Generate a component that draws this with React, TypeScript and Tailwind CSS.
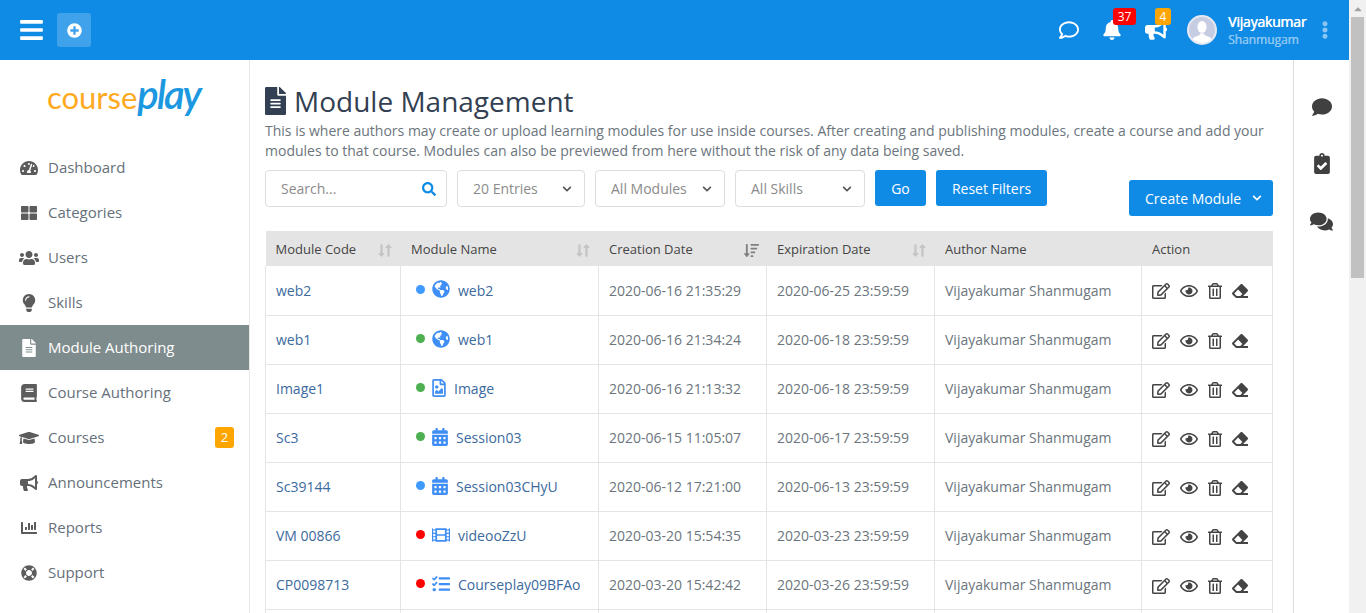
import {
  FaBars, FaPlusCircle, FaRegComment, FaBell, FaBullhorn, FaEllipsisV,
  FaTachometerAlt, FaThLarge, FaUsers, FaLightbulb, FaFileAlt, FaBook, FaGraduationCap,
  FaChartBar, FaLifeRing, FaSearch, FaChevronDown, FaLongArrowAltDown, FaLongArrowAltUp,
  FaSortAmountDown, FaGlobeAmericas, FaRegFileImage, FaCalendarAlt, FaFilm, FaTasks,
  FaRegEdit, FaRegEye, FaRegTrashAlt, FaEraser, FaComment, FaClipboardCheck, FaComments,
  FaCaretUp,
} from "react-icons/fa";

const menu = [
  { label: "Dashboard", icon: FaTachometerAlt, size: "text-[18px]" },
  { label: "Categories", icon: FaThLarge, size: "text-[16px]" },
  { label: "Users", icon: FaUsers, size: "text-[20px]" },
  { label: "Skills", icon: FaLightbulb, size: "text-[18px]" },
  { label: "Module Authoring", icon: FaFileAlt, size: "text-[18px]", active: true },
  { label: "Course Authoring", icon: FaBook, size: "text-[18px]" },
  { label: "Courses", icon: FaGraduationCap, size: "text-[20px]", badge: "2" },
  { label: "Announcements", icon: FaBullhorn, size: "text-[18px]" },
  { label: "Reports", icon: FaChartBar, size: "text-[16px]" },
  { label: "Support", icon: FaLifeRing, size: "text-[16px]" },
];

const rows = [
  { code: "web2", name: "web2", dot: "bg-[#3f9bff]", icon: FaGlobeAmericas, iconW: "w-[18px]", created: "2020-06-16 21:35:29", expires: "2020-06-25 23:59:59" },
  { code: "web1", name: "web1", dot: "bg-[#4caf50]", icon: FaGlobeAmericas, iconW: "w-[18px]", created: "2020-06-16 21:34:24", expires: "2020-06-18 23:59:59" },
  { code: "Image1", name: "Image", dot: "bg-[#4caf50]", icon: FaRegFileImage, iconW: "w-[14px]", created: "2020-06-16 21:13:32", expires: "2020-06-18 23:59:59" },
  { code: "Sc3", name: "Session03", dot: "bg-[#4caf50]", icon: FaCalendarAlt, iconW: "w-[16px]", created: "2020-06-15 11:05:07", expires: "2020-06-17 23:59:59" },
  { code: "Sc39144", name: "Session03CHyU", dot: "bg-[#3f9bff]", icon: FaCalendarAlt, iconW: "w-[16px]", created: "2020-06-12 17:21:00", expires: "2020-06-13 23:59:59" },
  { code: "VM 00866", name: "videooZzU", dot: "bg-[#ff0000]", icon: FaFilm, iconW: "w-[18px]", created: "2020-03-20 15:54:35", expires: "2020-03-23 23:59:59" },
  { code: "CP0098713", name: "Courseplay09BFAo", dot: "bg-[#ff0000]", icon: FaTasks, iconW: "w-[18px]", created: "2020-03-20 15:42:42", expires: "2020-03-26 23:59:59" },
];

const SortIcon = () => (
  <span className="flex text-[#c4c4c4] -mr-[2px]">
    <FaLongArrowAltDown className="w-[7px] h-[15px]" />
    <FaLongArrowAltUp className="w-[7px] h-[15px]" />
  </span>
);

const HeadCell = ({ label, sort }: { label: string; sort?: "none" | "desc" }) => (
  <th className="h-[35px] pt-[3px] px-[10px] text-left font-medium text-[13px] text-[#444] border-l border-[#e4e4e4] first:border-l-0">
    <div className="flex items-center justify-between">
      <span>{label}</span>
      {sort === "none" && <SortIcon />}
      {sort === "desc" && <FaSortAmountDown className="text-[#808080] text-[15px] -mr-[3px]" />}
    </div>
  </th>
);

const Select = ({ label, width }: { label: string; width: string }) => (
  <div className={`${width} h-[37px] flex items-center justify-between pl-[15px] pr-[12px] border border-[#dddddd] rounded-[4px] text-[14px] text-[#8b8b8b]`}>
    <span>{label}</span>
    <FaChevronDown className="text-[10px] text-[#555]" />
  </div>
);

export default function App() {
  return (
    <div className="flex h-[613px] w-[1366px] overflow-hidden bg-white font-['Open_Sans',sans-serif]">
      <div className="w-[1349px] flex flex-col">
        {/* Top bar */}
        <header className="h-[60px] shrink-0 bg-[#0f8be6] flex items-center pl-[20px] pr-[15px] text-white">
          <FaBars className="text-[26px] w-[23px]" />
          <button className="ml-[14px] w-[34px] h-[34px] rounded-[3px] bg-[#3fa2eb] flex items-center justify-center">
            <FaPlusCircle className="text-[15px]" />
          </button>
          <div className="ml-auto flex items-center">
            <FaRegComment className="text-[20px]" />
            <div className="relative ml-[23px]">
              <FaBell className="text-[20px]" />
              <span className="absolute -top-[12px] left-[11px] h-[17px] w-[23px] rounded-[3px] bg-[#ff0000] text-[12px] leading-[17px] text-center">37</span>
            </div>
            <div className="relative ml-[23px]">
              <FaBullhorn className="text-[22px]" />
              <span className="absolute -top-[11px] left-[10px] h-[17px] w-[16px] rounded-[3px] bg-[#ffa500] text-[12px] leading-[17px] text-center">4</span>
            </div>
            <div className="ml-[20px] w-[30px] h-[30px] rounded-full border-2 border-[#e6e9f2] bg-[#c6cde2] overflow-hidden">
              <svg viewBox="0 0 26 26" className="w-full h-full" fill="#fff">
                <ellipse cx="13" cy="10" rx="4.6" ry="6" />
                <path d="M2 26c0-5 4-6.5 7.500-7.500 1-.4 1.500-1 1.500-2h4c0 1 .5 1.600 1.500 2 3.500 1 7.500 2.500 7.500 7.500z" />
              </svg>
            </div>
            <div className="ml-[11px] w-[78px] flex flex-col">
              <span className="text-[14px] leading-[20px] [text-shadow:0.5px_0_0_#fff] whitespace-nowrap tracking-[-0.2px]">Vijayakumar</span>
              <span className="text-[12px] leading-[16px] [text-shadow:0.4px_0_0_#8cc6f2] text-[#8cc6f2] whitespace-nowrap">Shanmugam</span>
            </div>
            <FaEllipsisV className="ml-[10px] text-[18px] text-[#8cc6f2]" />
          </div>
        </header>

        <div className="flex flex-1 min-h-0">
          {/* Sidebar */}
          <aside className="w-[250px] shrink-0 border-r border-[#e8e8e8]">
            <div className="h-[85px] flex items-baseline justify-center pt-[14px] pr-[2px] whitespace-nowrap">
              <span className="font-['Lato',sans-serif] text-[31px] leading-none text-[#ffa91f]">course</span>
              <span className="font-['Lato',sans-serif] italic font-semibold text-[40px] leading-none tracking-[-2px] text-[#1c98e0]">play</span>
            </div>
            <nav>
              {menu.map((item) => (
                <div
                  key={item.label}
                  className={`h-[45px] flex items-center pl-[19px] pr-[15px] text-[15px] ${item.active ? "bg-[#7f8c8d] text-white" : "text-[#66707a]"}`}
                >
                  <span className={`w-[20px] mr-[9px] flex justify-center ${item.size} ${item.active ? "text-white" : "text-[#5c5c5c]"}`}>
                    <item.icon />
                  </span>
                  <span>{item.label}</span>
                  {item.badge && (
                    <span className="ml-auto w-[19px] h-[21px] rounded-[3px] bg-[#ffa500] text-white text-[13px] leading-[21px] text-center">{item.badge}</span>
                  )}
                </div>
              ))}
            </nav>
          </aside>

          {/* Main */}
          <main className="flex-1 min-w-0 pl-[15px] pr-[20px] pt-[22px] overflow-hidden">
            <h1 className="flex items-center text-[28px] leading-[38px] text-[#333f52]">
              <FaFileAlt className="text-[28px] mr-[8px] w-[21px]" />
              Module Management
            </h1>
            <p className="mt-[1px] text-[14px] leading-[20px] text-[#6c757d]">
              This is where authors may create or upload learning modules for use inside courses. After creating and publishing modules, create a course and add your modules to that course. Modules can also be previewed from here without the risk of any data being saved.
            </p>
            <div className="mt-[9px] flex items-start gap-[10px]">
              <div className="w-[182px] h-[37px] flex items-center justify-between pl-[15px] pr-[10px] border border-[#dddddd] rounded-[4px] text-[14px] text-[#8b8b8b]">
                <span>Search...</span>
                <FaSearch className="text-[14px] text-[#0f8be6]" />
              </div>
              <Select label="20 Entries" width="w-[128px]" />
              <Select label="All Modules" width="w-[130px]" />
              <Select label="All Skills" width="w-[130px]" />
              <button className="w-[51px] h-[36px] rounded-[3px] bg-[#0f8be6] text-white text-[14px]">Go</button>
              <button className="w-[111px] h-[36px] rounded-[3px] bg-[#0f8be6] text-white text-[14px]">Reset Filters</button>
              <button className="ml-auto mt-[10px] w-[144px] h-[36px] rounded-[3px] bg-[#0f8be6] text-white text-[14px] flex items-center pl-[16px]">
                Create Module
                <FaChevronDown className="ml-[11px] text-[10px]" />
              </button>
            </div>
            <table className="mt-[15px] w-[1007px] table-fixed border-collapse text-[14px]">
              <colgroup>
                <col className="w-[135px]" />
                <col className="w-[198px]" />
                <col className="w-[168px]" />
                <col className="w-[168px]" />
                <col className="w-[207px]" />
                <col className="w-[131px]" />
              </colgroup>
              <thead>
                <tr className="bg-[#e4e4e4]">
                  <HeadCell label="Module Code" sort="none" />
                  <HeadCell label="Module Name" sort="none" />
                  <HeadCell label="Creation Date" sort="desc" />
                  <HeadCell label="Expiration Date" sort="none" />
                  <HeadCell label="Author Name" />
                  <HeadCell label="Action" />
                </tr>
              </thead>
              <tbody>
                {rows.map((row) => (
                  <tr key={row.code} className="h-[49px] border-b border-[#e4e4e4]">
                    <td className="px-[10px] border-x border-[#e4e4e4] text-[#3c6a9e]">{row.code}</td>
                    <td className="pl-[15px] border-r border-[#e4e4e4] text-[#3c6a9e]">
                      <div className="flex items-center">
                        <span className={`w-[9px] h-[9px] -mt-[2px] rounded-full ${row.dot}`} />
                        <row.icon className={`ml-[7px] h-[18px] ${row.iconW} text-[#3f8ef5] -mt-[2px]`} />
                        <span className="ml-[8px]">{row.name}</span>
                      </div>
                    </td>
                    <td className="px-[10px] border-r border-[#e4e4e4] text-[#6c757d]">{row.created}</td>
                    <td className="px-[10px] border-r border-[#e4e4e4] text-[#6c757d]">{row.expires}</td>
                    <td className="px-[10px] border-r border-[#e4e4e4] text-[#6c757d]">Vijayakumar Shanmugam</td>
                    <td className="px-[10px] border-r border-[#e4e4e4] text-[#444]">
                      <div className="flex items-center gap-[10px] mt-[2px]">
                        <FaRegEdit className="text-[18px]" />
                        <FaRegEye className="text-[18px]" />
                        <FaRegTrashAlt className="h-[16px] w-[14px]" />
                        <FaEraser className="text-[16px]" />
                      </div>
                    </td>
                  </tr>
                ))}
                <tr className="h-[49px]">
                  <td className="border-x border-[#e4e4e4]" />
                  <td className="border-r border-[#e4e4e4]" />
                  <td className="border-r border-[#e4e4e4]" />
                  <td className="border-r border-[#e4e4e4]" />
                  <td className="border-r border-[#e4e4e4]" />
                  <td className="border-r border-[#e4e4e4]" />
                </tr>
              </tbody>
            </table>
          </main>

          {/* Right rail */}
          <aside className="w-[56px] shrink-0 border-l border-[#dddddd] flex flex-col items-center pt-[37px] gap-[36px] text-[#404040]">
            <FaComment className="text-[20px]" />
            <FaClipboardCheck className="h-[21px] w-[16px]" />
            <FaComments className="text-[23px]" />
          </aside>
        </div>
      </div>

      {/* Scrollbar */}
      <div className="w-[17px] bg-[#f1f1f1] flex flex-col">
        <div className="h-[17px] flex items-center justify-center text-[#a3a3a3]">
          <FaCaretUp className="text-[12px]" />
        </div>
        <div className="h-[261px] mx-[2px] bg-[#c1c1c1]" />
      </div>
    </div>
  );
}
